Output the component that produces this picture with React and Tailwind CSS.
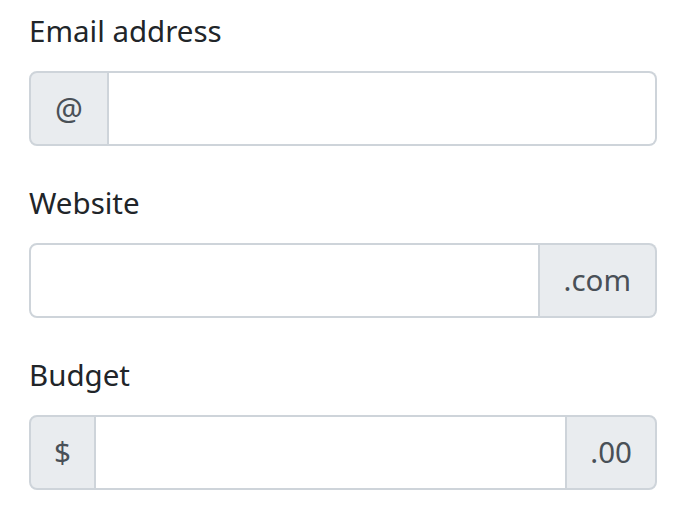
export default function App() {
  return (
    <div className="bg-white min-h-[507px] pl-[29px] pr-[24px] pt-[9px] font-['Noto_Sans',sans-serif] text-[29.5px] text-[#212529]">
      <div className="mb-[35px]">
        <div className="leading-[44px] mb-[18px]">Email address</div>
        <div className="flex h-[75px]">
          <div className="flex items-center justify-center w-[80px] bg-[#e9ecef] text-[#495057] border-2 border-[#ced4da] rounded-l-[8px] text-[31px]">@</div>
          <div className="flex-1 border-2 border-l-0 border-[#ced4da] rounded-r-[8px] bg-white"></div>
        </div>
      </div>
      <div className="mb-[35px]">
        <div className="leading-[44px] mb-[18px]">Website</div>
        <div className="flex h-[75px]">
          <div className="flex-1 border-2 border-[#ced4da] rounded-l-[8px] bg-white"></div>
          <div className="flex items-center px-[24px] bg-[#e9ecef] text-[#495057] border-2 border-l-0 border-[#ced4da] rounded-r-[8px]">.com</div>
        </div>
      </div>
      <div>
        <div className="leading-[44px] mb-[18px]">Budget</div>
        <div className="flex h-[75px]">
          <div className="flex items-center px-[23px] bg-[#e9ecef] text-[#495057] border-2 border-[#ced4da] rounded-l-[8px]">$</div>
          <div className="flex-1 border-2 border-l-0 border-r-0 border-[#ced4da] bg-white"></div>
          <div className="flex items-center px-[23px] bg-[#e9ecef] text-[#495057] border-2 border-[#ced4da] rounded-r-[8px]">.00</div>
        </div>
      </div>
    </div>
  );
}
